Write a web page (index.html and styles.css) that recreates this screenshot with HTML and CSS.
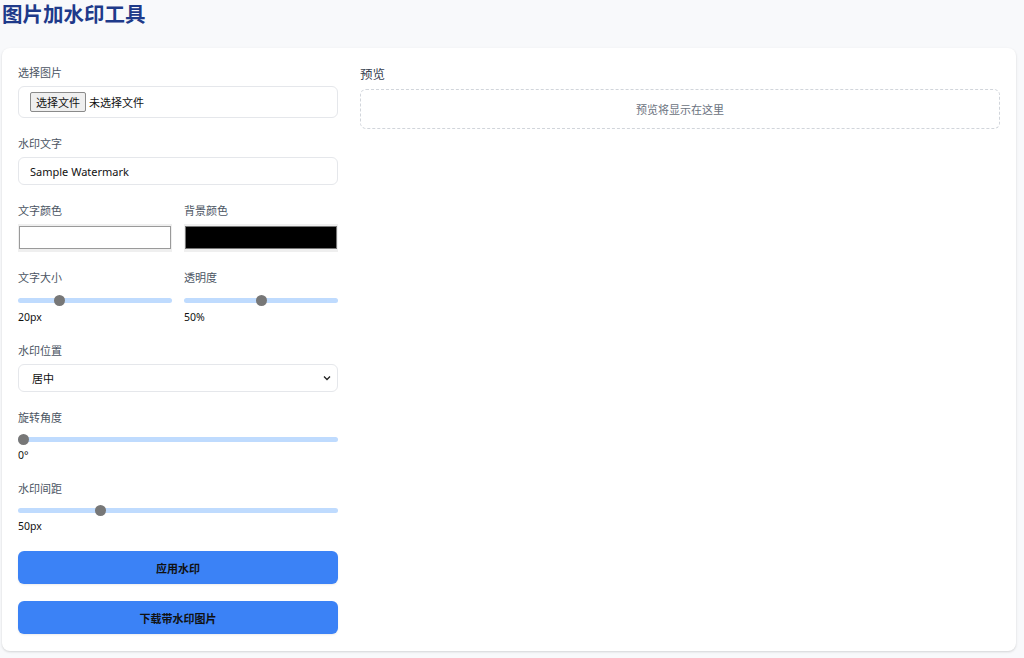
FILE: index.html
```html
<!DOCTYPE html>
<html lang="zh">
<head>
<meta charset="utf-8">
<title>图片加水印工具</title>
<link rel="stylesheet" href="styles.css">
</head>
<body>
<div class="page">
  <h1 class="title">图片加水印工具</h1>
  <div class="card">
    <div class="controls">
      <div class="group">
        <label class="label">选择图片</label>
        <div class="file-box">
          <span class="file-btn">选择文件</span>
          <span class="file-text">未选择文件</span>
        </div>
      </div>
      <div class="group">
        <label class="label">水印文字</label>
        <input class="text-input" type="text" value="Sample Watermark">
      </div>
      <div class="group two">
        <div>
          <label class="label">文字颜色</label>
          <div class="color-input"><div class="swatch swatch-white"></div></div>
        </div>
        <div>
          <label class="label">背景颜色</label>
          <div class="color-input"><div class="swatch swatch-black"></div></div>
        </div>
      </div>
      <div class="group two">
        <div>
          <label class="label">文字大小</label>
          <input class="range range-pair" type="range" min="10" max="50" value="20">
          <div class="value">20px</div>
        </div>
        <div>
          <label class="label">透明度</label>
          <input class="range range-pair" type="range" min="0" max="100" value="50">
          <div class="value">50%</div>
        </div>
      </div>
      <div class="group">
        <label class="label">水印位置</label>
        <div class="select">
          <span>居中</span>
          <svg class="chev" width="8" height="6" viewBox="0 0 8 6"><path d="M1 1.5 L4 4.5 L7 1.5" fill="none" stroke="#222" stroke-width="1.3"/></svg>
        </div>
      </div>
      <div class="group">
        <label class="label">旋转角度</label>
        <input class="range" type="range" min="0" max="360" value="0">
        <div class="value">0°</div>
      </div>
      <div class="group">
        <label class="label">水印间距</label>
        <input class="range" type="range" min="0" max="200" value="50">
        <div class="value">50px</div>
      </div>
      <button class="btn">应用水印</button>
      <button class="btn">下载带水印图片</button>
    </div>
    <div class="preview">
      <div class="preview-label">预览</div>
      <div class="preview-box">预览将显示在这里</div>
    </div>
  </div>
</div>
</body>
</html>
```
FILE: styles.css
```css
* { box-sizing: border-box; }
html, body { margin: 0; padding: 0; }
body {
  background: #f8f9fb;
  font-family: "Noto Sans", "Noto Sans CJK SC", sans-serif;
  color: #1f2937;
}
.page {
  padding: 0 8px 7px 2px;
}
.title {
  margin: 0;
  font-size: 20.5px;
  line-height: 26px;
  font-weight: 700;
  color: #1e3a8a;
  font-family: "Noto Sans CJK SC", sans-serif;
}
.card {
  margin-top: 22px;
  background: #fff;
  border-radius: 8px;
  box-shadow: 0 1px 3px rgba(0,0,0,0.10), 0 1px 2px rgba(0,0,0,0.06);
  padding: 16px 16px 17px 16px;
  display: grid;
  grid-template-columns: 320px 1fr;
  column-gap: 22px;
  align-items: start;
}
.group { margin-bottom: 17px; }
.two {
  display: grid;
  grid-template-columns: 1fr 1fr;
  column-gap: 12px;
}
.label {
  display: block;
  font-size: 11px;
  line-height: 16px;
  color: #4b5563;
  margin-bottom: 6px;
  font-family: "Noto Sans CJK SC", sans-serif;
}
.file-box {
  height: 32px;
  border: 1px solid #e5e7eb;
  border-radius: 6px;
  display: flex;
  align-items: center;
  padding-left: 11px;
  font-size: 11px;
  font-family: "Noto Sans CJK SC", sans-serif;
  color: #111;
}
.file-btn {
  height: 20px;
  line-height: 18px;
  padding: 0 5px;
  background: #efefef;
  border: 1px solid #8a8a8a;
  border-radius: 2px;
  margin-right: 3px;
}
.text-input {
  display: block;
  width: 100%;
  height: 28px;
  border: 1px solid #e5e7eb;
  border-radius: 6px;
  padding: 0 11px;
  font-size: 11px;
  font-family: "Noto Sans", "Noto Sans CJK SC", sans-serif;
  color: #111;
  outline: none;
}
.color-input {
  height: 28px;
  background: #efefef;
  padding: 2px 1px 3px 1px;
}
.swatch {
  height: 100%;
  border: 1px solid #9a9a9a;
}
.swatch-white { background: #fff; }
.swatch-black { background: #000; border-color: #777; }
.range {
  -webkit-appearance: none;
  appearance: none;
  display: block;
  width: 100%;
  height: 16px;
  margin: 0;
  background: transparent;
}
.range.range-pair { height: 18px; }
.range::-webkit-slider-runnable-track {
  height: 5px;
  background: #bfdbfe;
  border-radius: 3px;
}
.range::-webkit-slider-thumb {
  -webkit-appearance: none;
  appearance: none;
  width: 11px;
  height: 11px;
  border-radius: 50%;
  background: #777;
  margin-top: -3px;
}
.value {
  font-size: 10.5px;
  line-height: 16px;
  color: #111;
}
.select {
  height: 28px;
  border: 1px solid #e5e7eb;
  border-radius: 6px;
  display: flex;
  align-items: center;
  justify-content: space-between;
  padding: 0 6px 0 13px;
  font-size: 11px;
  font-family: "Noto Sans CJK SC", sans-serif;
  color: #111;
}
.btn {
  display: block;
  width: 100%;
  height: 33px;
  border: none;
  border-radius: 6px;
  background: #3b82f6;
  color: #111;
  font-weight: 700;
  font-size: 11px;
  font-family: "Noto Sans CJK SC", sans-serif;
  margin-top: 17px;
  box-shadow: 0 1px 2px rgba(0,0,0,0.08);
}
.btn + .btn { margin-top: 17px; }
.controls .group:last-of-type { margin-bottom: 0; }
.preview { padding-top: 2px; }
.preview-label {
  font-size: 12.5px;
  line-height: 16px;
  color: #374151;
  margin-bottom: 7px;
  font-family: "Noto Sans CJK SC", sans-serif;
}
.preview-box {
  height: 40px;
  border: 1px dashed #d1d5db;
  border-radius: 6px;
  display: flex;
  align-items: center;
  justify-content: center;
  font-size: 11px;
  color: #6b7280;
  font-family: "Noto Sans CJK SC", sans-serif;
}
```
